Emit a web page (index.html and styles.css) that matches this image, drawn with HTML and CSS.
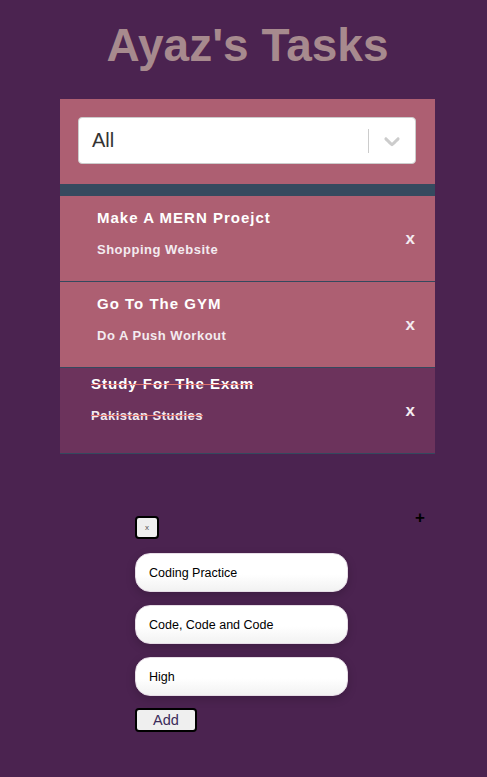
FILE: index.html
```html
<!DOCTYPE html>
<html>
<head>
<meta charset="utf-8">
<link rel="stylesheet" href="styles.css">
</head>
<body>
<div class="page">
  <h1 class="title">Ayaz's Tasks</h1>
  <div class="panel">
    <div class="filter">
      <div class="select">
        <span class="value">All</span>
        <span class="indicators">
          <span class="sep"></span>
          <svg class="chev" viewBox="0 0 20 20" width="26" height="26"><path fill="#cccccc" d="M4.516 7.548c0.436-0.446 1.043-0.481 1.576 0l3.908 3.747 3.908-3.747c0.533-0.481 1.141-0.446 1.574 0 0.436 0.445 0.408 1.197 0 1.615-0.406 0.418-4.695 4.502-4.695 4.502-0.217 0.223-0.502 0.335-0.787 0.335s-0.57-0.112-0.789-0.335c0 0-4.287-4.084-4.695-4.502s-0.436-1.17 0-1.615z"/></svg>
        </span>
      </div>
    </div>
    <div class="bar"></div>
    <div class="task">
      <div class="task-text">
        <h3 class="task-title">Make A MERN Proejct</h3>
        <p class="task-desc">Shopping Website</p>
      </div>
      <span class="remove">x</span>
    </div>
    <div class="task">
      <div class="task-text">
        <h3 class="task-title">Go To The GYM</h3>
        <p class="task-desc">Do A Push Workout</p>
      </div>
      <span class="remove">x</span>
    </div>
    <div class="task done">
      <div class="task-text">
        <h3 class="task-title">Study For The Exam</h3>
        <p class="task-desc">Pakistan Studies</p>
      </div>
      <span class="remove">x</span>
    </div>
  </div>
  <form class="add-form">
    <div class="form-top">
      <button type="button" class="close">x</button>
      <span class="plus">+</span>
    </div>
    <input class="field" type="text" value="Coding Practice">
    <input class="field" type="text" value="Code, Code and Code">
    <input class="field" type="text" value="High">
    <button type="button" class="add">Add</button>
  </form>
</div>
</body>
</html>
```
FILE: styles.css
```css
html, body {
  margin: 0;
  padding: 0;
  background: #4b2350;
  font-family: "Liberation Sans", Arial, sans-serif;
}
.page {
  padding-left: 8px;
  display: flex;
  flex-direction: column;
  align-items: center;
  min-height: 777px;
  box-sizing: border-box;
}
.title {
  margin: 19px 0 28px;
  font-size: 46px;
  line-height: 52px;
  font-weight: bold;
  color: #a78a8e;
}
.panel {
  width: 375px;
  background: #ad5f72;
}
.filter {
  padding: 18px 19px 20px 18px;
}
.select {
  height: 47px;
  box-sizing: border-box;
  border: 1px solid #cccccc;
  border-radius: 4px;
  background: #ffffff;
  display: flex;
  align-items: center;
  justify-content: space-between;
}
.value {
  padding-left: 13px;
  font-size: 20px;
  color: #333333;
}
.indicators {
  display: flex;
  align-items: center;
}
.sep {
  width: 1px;
  height: 24px;
  background: #cccccc;
}
.chev {
  display: block;
  margin-left: 10px;
  margin-right: 10px;
}
.bar {
  height: 12px;
  background: #354a5f;
}
.task {
  height: 85px;
  border-bottom: 1px solid #34495e;
  display: flex;
  color: #f3ebf0;
}
.task-text {
  flex: 1;
  padding: 13px 0 0 37px;
}
.task-title {
  margin: 0;
  font-size: 15px;
  line-height: 18px;
  font-weight: bold;
  letter-spacing: 1px;
  color: #ffffff;
}
.task-desc {
  margin: 15px 0 0;
  font-size: 13px;
  line-height: 16px;
  font-weight: bold;
  letter-spacing: 0.5px;
}
.remove {
  align-self: center;
  margin-right: 20px;
  font-size: 17px;
  font-weight: bold;
  line-height: 20px;
  color: #f3ebf0;
}
.done {
  background: #6c335c;
}
.done .task-text {
  padding: 7px 0 0 31px;
}
.done .task-title,
.done .task-desc {
  text-decoration: line-through;
  text-decoration-color: #e0726d;
}
.add-form {
  align-self: flex-start;
  margin: 62px 0 0 127px;
  display: flex;
  flex-direction: column;
  align-items: flex-start;
}
.form-top {
  width: 290px;
  display: flex;
  justify-content: space-between;
  align-items: flex-start;
}
.close {
  width: 24px;
  height: 23px;
  box-sizing: border-box;
  padding: 0;
  border: 2px solid #000000;
  border-radius: 4px;
  background: #efefef;
  font-family: "Liberation Sans", Arial, sans-serif;
  font-size: 8px;
  color: #555555;
}
.plus {
  margin-top: -7px;
  font-size: 17px;
  line-height: 17px;
  font-weight: bold;
  color: #000000;
}
.field {
  width: 213px;
  height: 39px;
  box-sizing: border-box;
  margin-top: 14px;
  padding: 0 0 0 13px;
  border: 1px solid #e6dde6;
  border-radius: 15px;
  background: linear-gradient(#ffffff 55%, #f2f2f2);
  box-shadow: 0 3px 10px rgba(0, 0, 0, 0.18);
  font-family: "Liberation Sans", Arial, sans-serif;
  font-size: 12.5px;
  color: #000000;
  outline: none;
}
.field + .field {
  margin-top: 13px;
}
.add {
  margin-top: 12px;
  width: 62px;
  height: 24px;
  box-sizing: border-box;
  padding: 0;
  border: 2px solid #000000;
  border-radius: 4px;
  background: #efefef;
  font-family: "Liberation Sans", Arial, sans-serif;
  font-size: 14.5px;
  color: #3b2c5a;
}
```
